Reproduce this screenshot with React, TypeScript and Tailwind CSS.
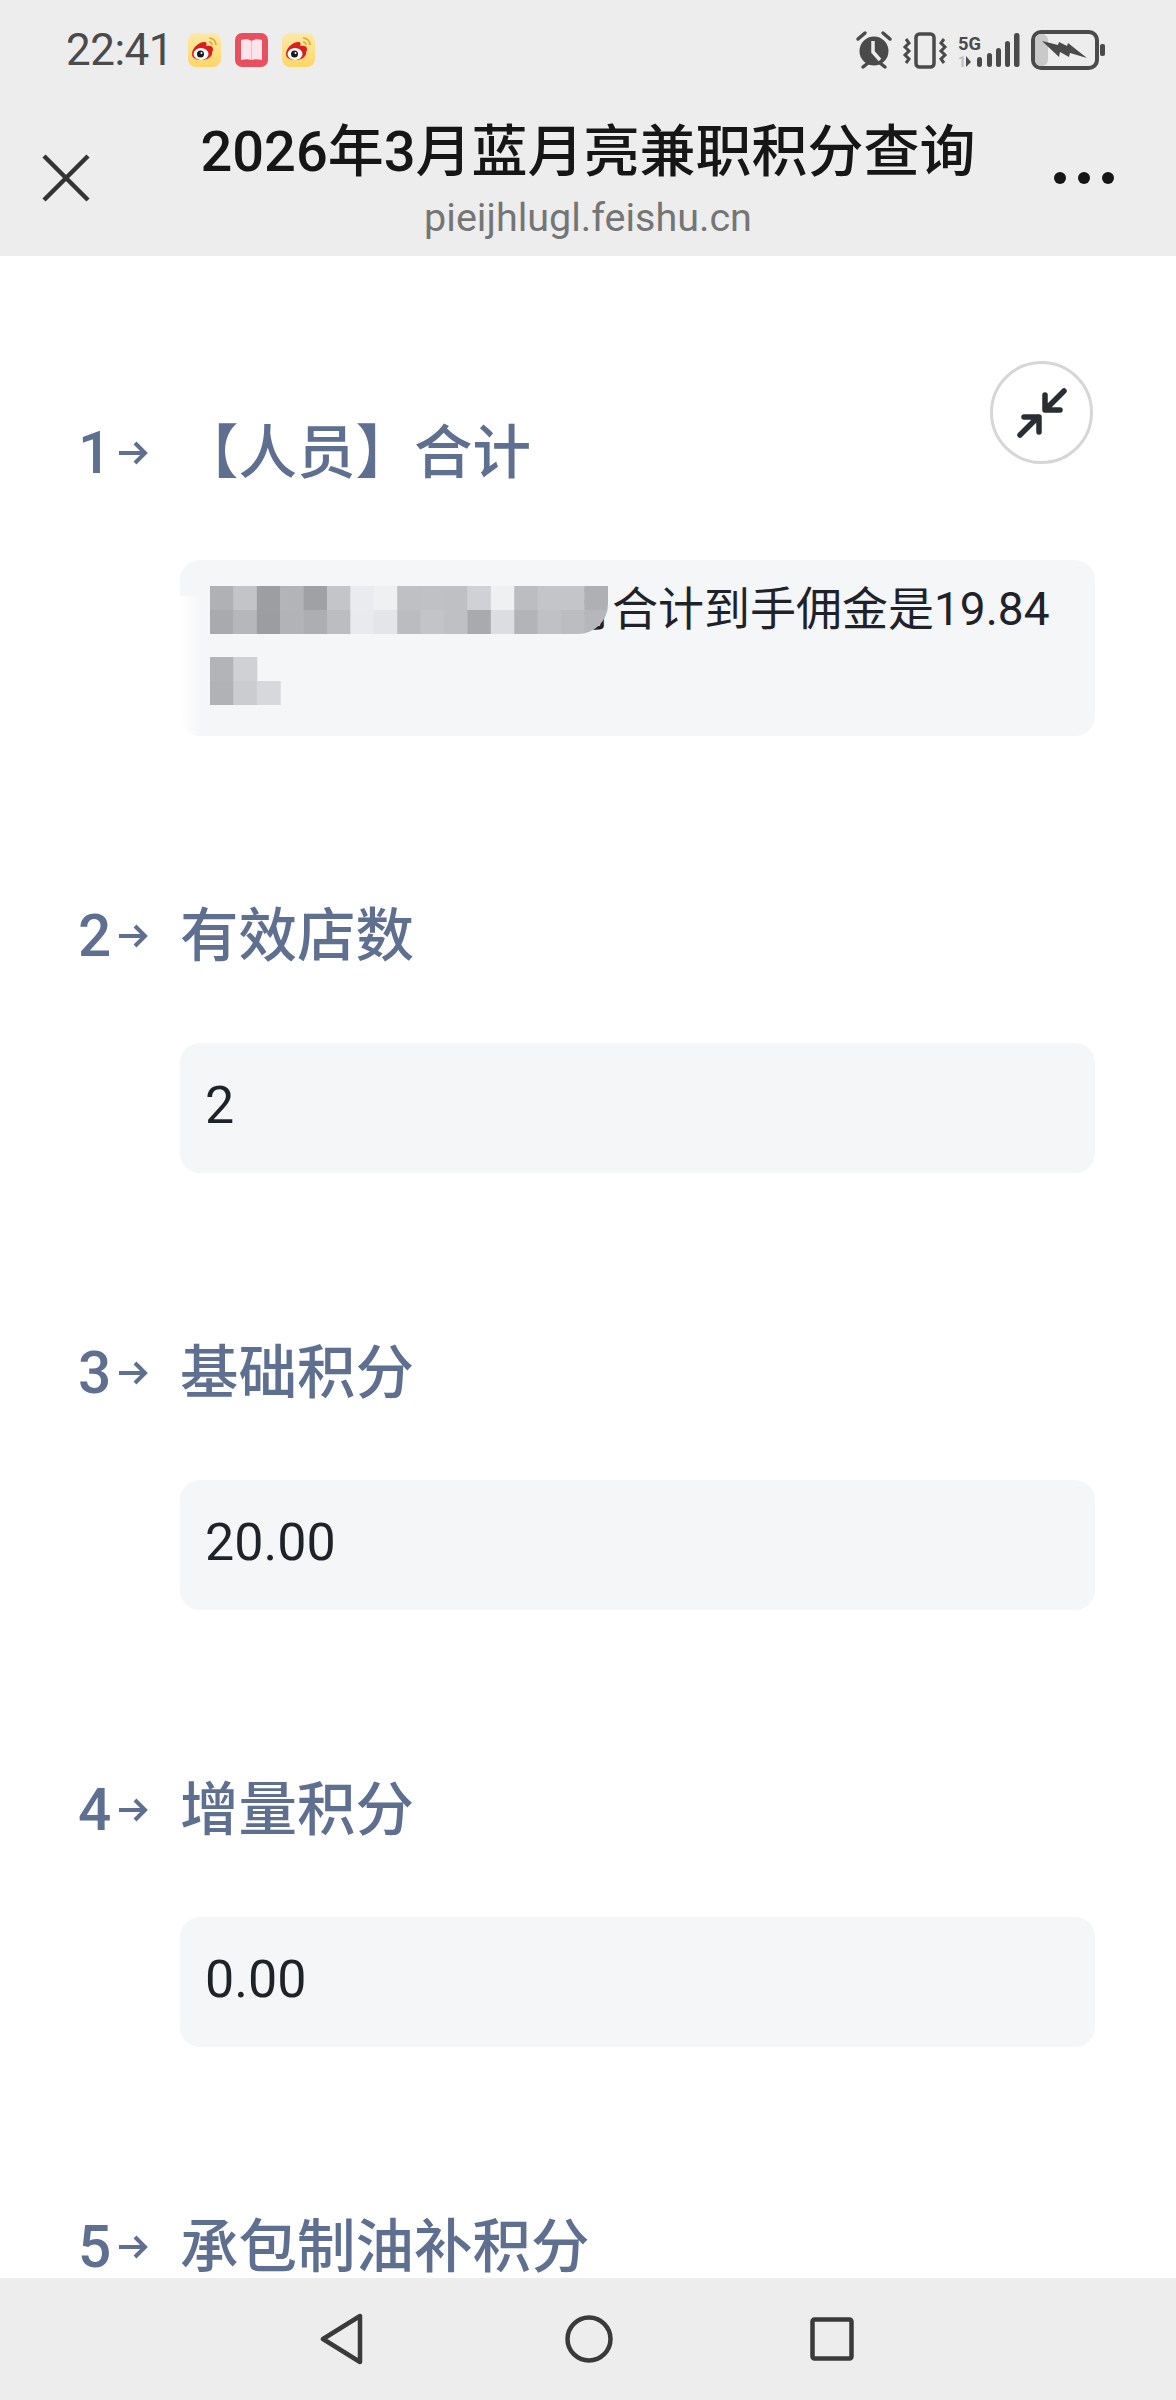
const FONT = "font-['Roboto','Noto_Sans_CJK_SC',sans-serif]";

const row1 = ["#b0b1b4", "#c3c4c8", "#9d9ea2", "#b3b4b8", "#a0a1a5", "#c4c5c9", "#eaebee", "#eef0f2", "#bfc0c4", "#c0c1c5", "#bfc0c4", "#d0d1d4", "#eff0f2", "#bcbdc1", "#c4c5c8", "#c4c5c8", "#afb0b4"];
const row2 = ["#a9aaae", "#b6b7bb", "#9c9da1", "#b2b3b7", "#adaeb2", "#bcbdc1", "#e9eaed", "#e4e5e8", "#bbbcc0", "#c3c4c8", "#bfc0c4", "#a9aaae", "#dbdde0", "#b3b4b8", "#c0c1c5", "#bcbdc1", "#b6b7bb"];

const Weibo = () => (
  <svg width="33" height="34" viewBox="0 0 33 34" className="shrink-0">
    <defs>
      <linearGradient id="wb" x1="0" y1="0" x2="0" y2="1">
        <stop offset="0" stopColor="#fde9a8" />
        <stop offset="1" stopColor="#fdd666" />
      </linearGradient>
    </defs>
    <rect width="33" height="34" rx="8" fill="url(#wb)" />
    <path d="M4 21c0-6 7-12 12-12 3 0 3 2 2 4 4-1 7 0 7 3 0 1 0 2-1 3 1 4-4 8-10 8-6 0-10-2-10-6z" fill="#d9201f" />
    <ellipse cx="13" cy="21" rx="7.5" ry="6" fill="#fff" />
    <circle cx="12.5" cy="21" r="3.5" fill="#1b1b1b" />
    <circle cx="13.5" cy="20" r="1" fill="#fff" />
    <path d="M21 5c4 0 7 3 7 7M21 9c2 0 3 1 3 3" fill="none" stroke="#e0a52c" strokeWidth="1.6" />
  </svg>
);

const Book = () => (
  <svg width="33" height="34" viewBox="0 0 33 34" className="shrink-0">
    <rect width="33" height="34" rx="7" fill="#e9505f" />
    <path d="M6 7c4-1 8-1 10.500 1 2.500-2 6.500-2 10.500-1v20c-4-1-8-1-10.500 0-2.500-1-6.500-1-10.500 0z" fill="#fde3ea" />
    <path d="M16.500 8v19" stroke="#f4b8c4" strokeWidth="1" />
  </svg>
);

const StatusIcons = () => (
  <svg width="250" height="44" viewBox="0 0 250 44" fill="#4a4a4a">
    {/* alarm */}
    <circle cx="19" cy="23" r="14.500" />
    <path d="M18 13v11l7 8" fill="none" stroke="#ededed" strokeWidth="3.500" />
    <path d="M3 11l7-6M35 11l-7-6M8 39l5-4M30 39l-5-4" fill="none" stroke="#4a4a4a" strokeWidth="3.500" strokeLinecap="round" />
    {/* vibrate */}
    <rect x="61" y="6" width="18" height="33" rx="3.500" fill="none" stroke="#4a4a4a" strokeWidth="3.500" />
    <path d="M51 11l3 4-4 4 4 4-4 4 4 4-3 4M89 11l-3 4 4 4-4 4 4 4-4 4 3 4" fill="none" stroke="#4a4a4a" strokeWidth="3" />
    {/* signal */}
    <text x="103" y="22" fontSize="19" fontWeight="700" fontFamily="Roboto, sans-serif" textLength="23" lengthAdjust="spacingAndGlyphs">5G</text>
    <text x="103" y="39" fontSize="14" fontWeight="700" fontFamily="Roboto, sans-serif" fill="#bdbdbd">1</text>
    <path d="M111 28v11l5-5z" />
    <rect x="122" y="29" width="5" height="10" rx="2.500" />
    <rect x="132" y="25" width="5" height="14" rx="2.500" />
    <rect x="141" y="20" width="5" height="19" rx="2.500" />
    <rect x="150" y="13" width="5" height="26" rx="2.500" />
    <rect x="159" y="5" width="5.500" height="34" rx="2.500" />
    {/* battery */}
    <rect x="178" y="4" width="64" height="36" rx="8" fill="none" stroke="#4a4a4a" strokeWidth="4" />
    <rect x="180" y="6" width="13" height="32" rx="6" fill="#c9c9c9" />
    <path d="M187 13l16 4 1-3 8 4 1-3 19 15-17-5-1 4-9-5-1 5z" />
    <rect x="245" y="16" width="5" height="12" rx="2" />
  </svg>
);

const Arrow = () => (
  <svg width="30" height="26" viewBox="0 0 30 26" fill="none" stroke="#5e6f8f" strokeWidth="4" className="shrink-0">
    <path d="M1 13h26M17 3l10 10-10 10" />
  </svg>
);

const Mosaic = ({ a, b, width }: { a: string[]; b: string[]; width: number }) => (
  <svg width={width} height="48" viewBox={`0 0 ${width} 48`} className="shrink-0">
    {a.map((c, i) => (
      <rect key={i} x={i * 23.400} y="0" width="23.900" height="24.500" fill={c} />
    ))}
    {b.map((c, i) => (
      <rect key={i} x={i * 23.400} y="24" width="23.900" height="24" fill={c} />
    ))}
  </svg>
);

const Label = ({ n, children }: { n: number; children: React.ReactNode }) => (
  <div className="flex h-[70px] items-center pt-[2px] pl-[78px] text-[58.5px] leading-[60px] font-medium text-[#5e6f8f]">
    <span className="w-[40px] shrink-0">{n}</span>
    <Arrow />
    <span className="ml-[32px] whitespace-nowrap">{children}</span>
  </div>
);

const Value = ({ n, label, value }: { n: number; label: string; value: string }) => (
  <section className="mb-[164px]">
    <Label n={n}>{label}</Label>
    <div className="mt-[73px] ml-[180px] flex h-[130px] w-[915px] items-center rounded-[20px] bg-[#f5f6f7] pb-[4px] pl-[25px] text-[52px] text-[#1f2329]">
      {value}
    </div>
  </section>
);

export default function App() {
  return (
    <div className={`${FONT} flex h-[2400px] w-[1176px] flex-col overflow-hidden bg-white`}>
      <header className="h-[256px] shrink-0 bg-[#ededed]">
        <div className="flex h-[100px] items-center pr-[71px] pl-[66px]">
          <span className="mr-[16px] w-[106px] text-[44px] leading-none tracking-[-0.5px] text-[#4a4a4a]">22:41</span>
          <div className="flex gap-[14px]">
            <Weibo />
            <Book />
            <Weibo />
          </div>
          <div className="ml-auto">
            <StatusIcons />
          </div>
        </div>
        <div className="flex items-start">
          <div className="flex w-[120px] shrink-0 justify-start pt-[54px] pl-[42px]">
            <svg width="48" height="48" viewBox="0 0 48 48" fill="none" stroke="#333" strokeWidth="4.500">
              <path d="M2 2l44 44M46 2L2 46" />
            </svg>
          </div>
          <div className="flex-1 pt-[15px] text-center">
            <div className="text-[56px] leading-[74px] font-medium text-[#161616]">2026年3月蓝月亮兼职积分查询</div>
            <div className="mt-[2px] text-[39.500px] leading-[54px] text-[#757575]">pieijhlugl.feishu.cn</div>
          </div>
          <div className="flex w-[120px] shrink-0 justify-end gap-[12px] pt-[72px] pr-[62px]">
            <span className="size-[12px] shrink-0 rounded-full bg-[#161616]" />
            <span className="size-[12px] shrink-0 rounded-full bg-[#161616]" />
            <span className="size-[12px] shrink-0 rounded-full bg-[#161616]" />
          </div>
        </div>
      </header>

      <main className="relative flex-1 overflow-hidden pt-[161px]">
        <button className="absolute top-[105px] left-[990px] flex size-[103px] items-center justify-center rounded-full border-[3px] border-[#d6d6d6] bg-white">
          <svg width="50" height="50" viewBox="0 0 50 50" fill="none" stroke="#2a2d33" strokeWidth="5.500" strokeLinecap="round" strokeLinejoin="round">
            <path d="M47 3L29 21M28 7v15h15M3 47l18-18M7 29h15v15" />
          </svg>
        </button>

        <section className="mb-[164px]">
          <Label n={1}>【人员】合计</Label>
          <div className="relative mt-[73px] ml-[180px] h-[176px] w-[915px] rounded-[20px] bg-[#f5f6f7] pt-[14px] pl-[30px] text-[46px] leading-[71px] text-[#1f2329]">
            {/* smear left behind by the retouching */}
            <div className="absolute top-[36px] bottom-0 left-0 w-[22px] bg-gradient-to-r from-white to-transparent" />
            <div className="relative flex h-[71px] items-center">
              <div className="relative z-10 -mr-[42px] overflow-hidden rounded-br-[30px]">
                <Mosaic a={row1} b={row2} width={398} />
              </div>
              <span className="whitespace-nowrap">月合计到手佣金是19.84</span>
            </div>
            <div className="relative flex h-[71px] items-center">
              <Mosaic a={["#b3b4b8", "#d0d1d4"]} b={["#b1b2b6", "#cbccd0", "#d7d8db"]} width={71} />
            </div>
          </div>
        </section>

        <Value n={2} label="有效店数" value="2" />
        <Value n={3} label="基础积分" value="20.00" />
        <Value n={4} label="增量积分" value="0.00" />
        <Label n={5}>承包制油补积分</Label>
      </main>

      <nav className="flex h-[122px] shrink-0 items-center bg-[#ededed] pl-[320px]">
        <svg width="44" height="52" viewBox="0 0 44 52" fill="none" stroke="#3a3a3a" strokeWidth="4.500" strokeLinejoin="round">
          <path d="M40 3v46L3 26z" />
        </svg>
        <svg width="48" height="48" viewBox="0 0 48 48" fill="none" stroke="#3a3a3a" strokeWidth="4.500" className="ml-[201px]">
          <circle cx="24" cy="24" r="21.500" />
        </svg>
        <svg width="44" height="44" viewBox="0 0 44 44" fill="none" stroke="#3a3a3a" strokeWidth="4.500" strokeLinejoin="round" className="ml-[197px]">
          <rect x="2.500" y="2.500" width="39" height="39" rx="2" />
        </svg>
      </nav>
    </div>
  );
}
